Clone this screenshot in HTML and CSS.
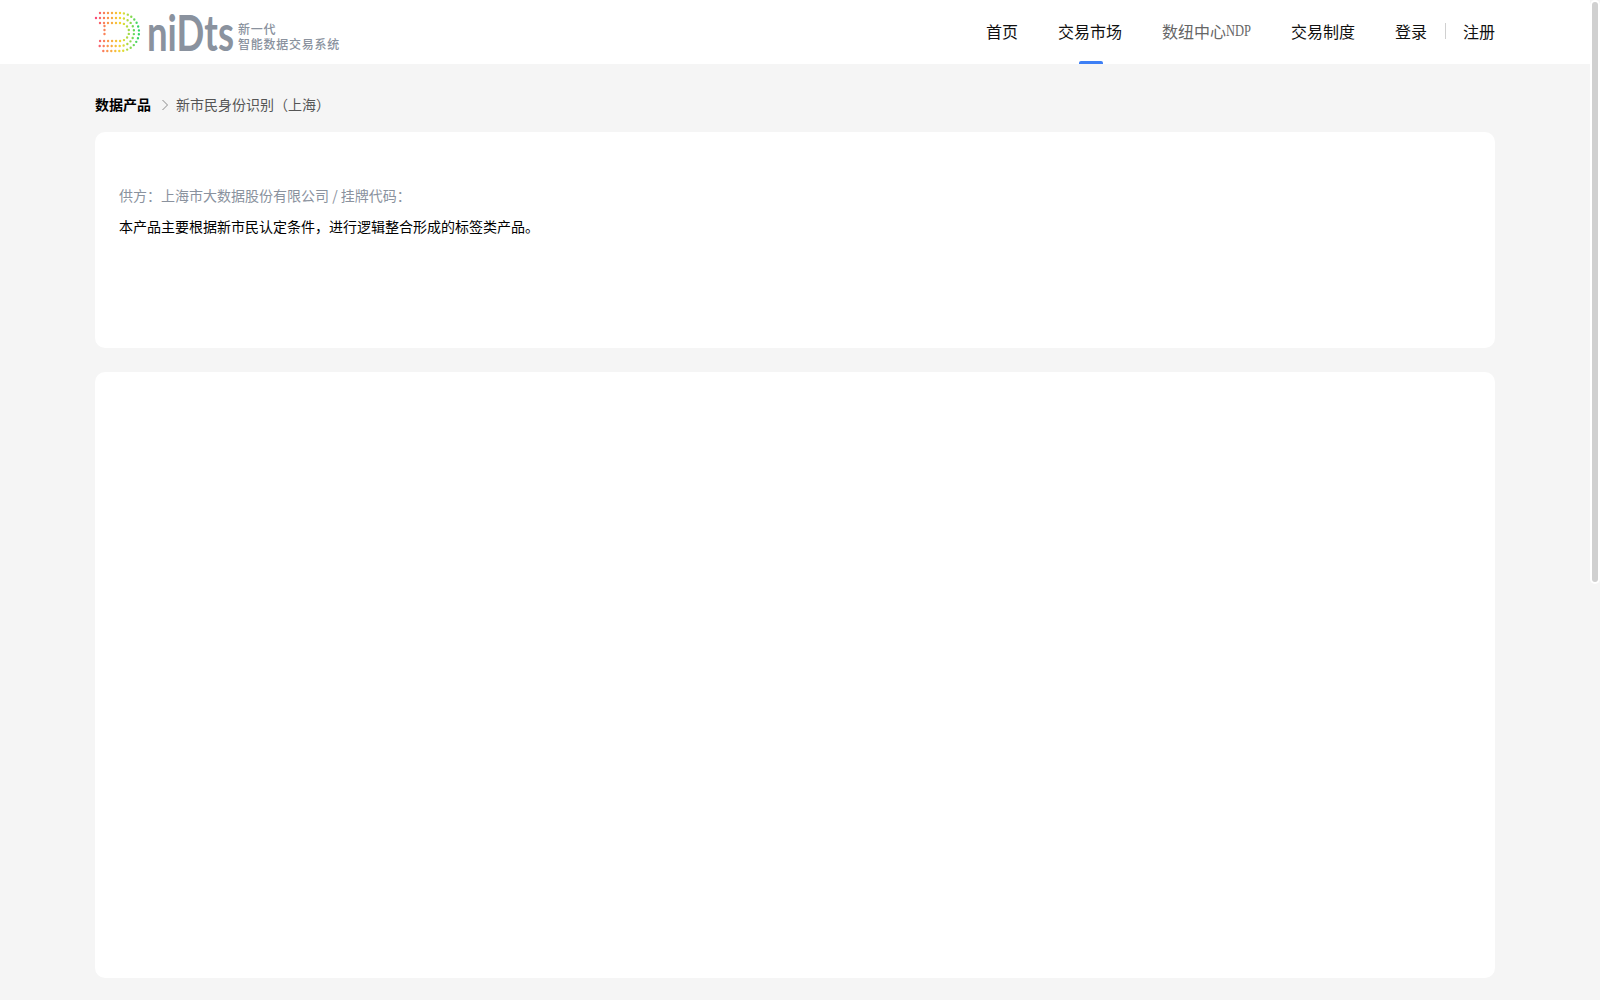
FILE: index.html
```html
<!DOCTYPE html>
<html lang="zh-CN">
<head>
    <meta charset="UTF-8">
    <title>新市民身份识别（上海）</title>
    <link rel="stylesheet" href="styles.css">
</head>
<body>
    <div class="page">
        <header class="header">
            <div class="header-inner">
                <a class="logo">
                    <svg class="logo-mark" width="48" height="44" viewBox="93 10 48 44" fill="none">
                        <defs>
                            <linearGradient id="dots" gradientUnits="userSpaceOnUse" x1="95" y1="32" x2="139" y2="32">
                                <stop offset="0" stop-color="#f8467c"/>
                                <stop offset="0.3" stop-color="#fb9a4a"/>
                                <stop offset="0.6" stop-color="#f2dc2e"/>
                                <stop offset="1" stop-color="#2fd66b"/>
                            </linearGradient>
                        </defs>
                        <g stroke="url(#dots)" stroke-width="2.400" stroke-linecap="round" stroke-dasharray="0 4">
                            <path d="M100 13H120A19 19 0 0 1 120 51H100"/>
                            <path d="M96 18H120A14 14 0 0 1 120 46H96"/>
                            <path d="M100 23H120A9 9 0 0 1 120 41H100"/>
                            <path d="M104.500 26V38"/>
                        </g>
                    </svg>
                    <span class="logo-word">niDts</span>
                    <span class="logo-text">
                        <span>新一代</span>
                        <span>智能数据交易系统</span>
                    </span>
                </a>
                <nav class="nav">
                    <a>首页</a>
                    <a class="active">交易市场</a>
                    <a class="muted">数纽中心<span class="ndp">NDP</span></a>
                    <a>交易制度</a>
                </nav>
                <div class="account">
                    <a>登录</a>
                    <i class="sep"></i>
                    <a>注册</a>
                </div>
            </div>
        </header>
        <main class="main">
            <div class="crumbs">
                <b>数据产品</b>
                <svg class="crumb-arrow" width="8" height="12" viewBox="0 0 8 12" fill="none">
                    <path d="M1.500 1L6.500 6L1.500 11" stroke="#8c8c8c"/>
                </svg>
                <span>新市民身份识别（上海）</span>
            </div>
            <section class="card card-info">
                <p class="supplier">供方：上海市大数据股份有限公司 / 挂牌代码：</p>
                <p class="desc">本产品主要根据新市民认定条件，进行逻辑整合形成的标签类产品。</p>
            </section>
            <section class="card card-detail"></section>
        </main>
    </div>
    <div class="scroll-thumb"></div>
</body>
</html>
```

FILE: styles.css
```css
body {
    font-family: "Noto Sans CJK SC", "Liberation Sans", sans-serif;
    margin: 0;
    padding: 0;
    background-color: #f5f5f5;
    color: #111;
    height: 1000px;
    overflow: hidden;
}
.page {
    margin-right: 10px;
}
.header {
    background-color: #fff;
    height: 64px;
}
.header-inner {
    display: flex;
    align-items: center;
    width: 1400px;
    height: 100%;
    margin: 0 auto;
}
.logo {
    display: flex;
    align-items: center;
    margin-right: auto;
}
.logo-mark {
    margin-left: -2px;
}
.logo-word {
    display: inline-block;
    width: 85px;
    font-family: Lato, sans-serif;
    font-size: 50px;
    font-weight: 700;
    line-height: 44px;
    color: #8a929e;
    margin-left: 6px;
    transform: scaleX(0.73);
    transform-origin: left center;
}
.logo-text {
    display: flex;
    flex-direction: column;
    margin: 7px 0 0 6px;
    font-size: 12px;
    font-weight: 500;
    line-height: 15px;
    letter-spacing: 0.75px;
    color: #8a929e;
}
.nav {
    display: flex;
    gap: 40px;
    height: 100%;
}
.nav a, .account a {
    display: flex;
    align-items: center;
    box-sizing: border-box;
    padding-bottom: 2px;
    font-size: 16px;
    position: relative;
    height: 100%;
}
.nav a.muted {
    color: #666;
}
.ndp {
    display: inline-block;
    width: 25px;
    font-family: "Liberation Serif", serif;
    font-size: 16px;
    transform: scaleX(0.78);
    transform-origin: left center;
}
.nav a.active::after {
    content: "";
    position: absolute;
    left: 50%;
    bottom: 0;
    width: 24px;
    height: 3px;
    margin-left: -11px;
    background-color: #3d7ff5;
    border-radius: 2px 2px 0 0;
}
.account {
    display: flex;
    align-items: center;
    height: 100%;
    margin-left: 40px;
}
.sep {
    width: 1px;
    height: 16px;
    margin: 0 17px 2px 18px;
    background-color: #d0d0d0;
}
.main {
    width: 1400px;
    margin: 0 auto;
}
.crumbs {
    display: flex;
    align-items: center;
    box-sizing: border-box;
    height: 68px;
    padding-top: 12px;
    font-size: 14px;
    color: #555;
}
.crumbs b {
    color: #000;
}
.crumb-arrow {
    margin: 2px 7px 0 10px;
}
.card {
    background-color: #fff;
    border-radius: 10px;
}
.card-info {
    height: 216px;
    padding: 52px 24px 0;
    box-sizing: border-box;
    margin-bottom: 24px;
}
.card-detail {
    height: 606px;
}
.supplier, .desc {
    margin: 0;
    font-size: 14px;
    line-height: 22px;
}
.supplier {
    color: #8a929e;
    margin-bottom: 9px;
}
.desc {
    color: #000;
}
.scroll-thumb {
    position: absolute;
    top: 2px;
    right: 2px;
    width: 6px;
    height: 580px;
    background-color: #d0d0d0;
    border-radius: 3px;
    box-shadow: 0 0 0 2px #fff;
}
```
